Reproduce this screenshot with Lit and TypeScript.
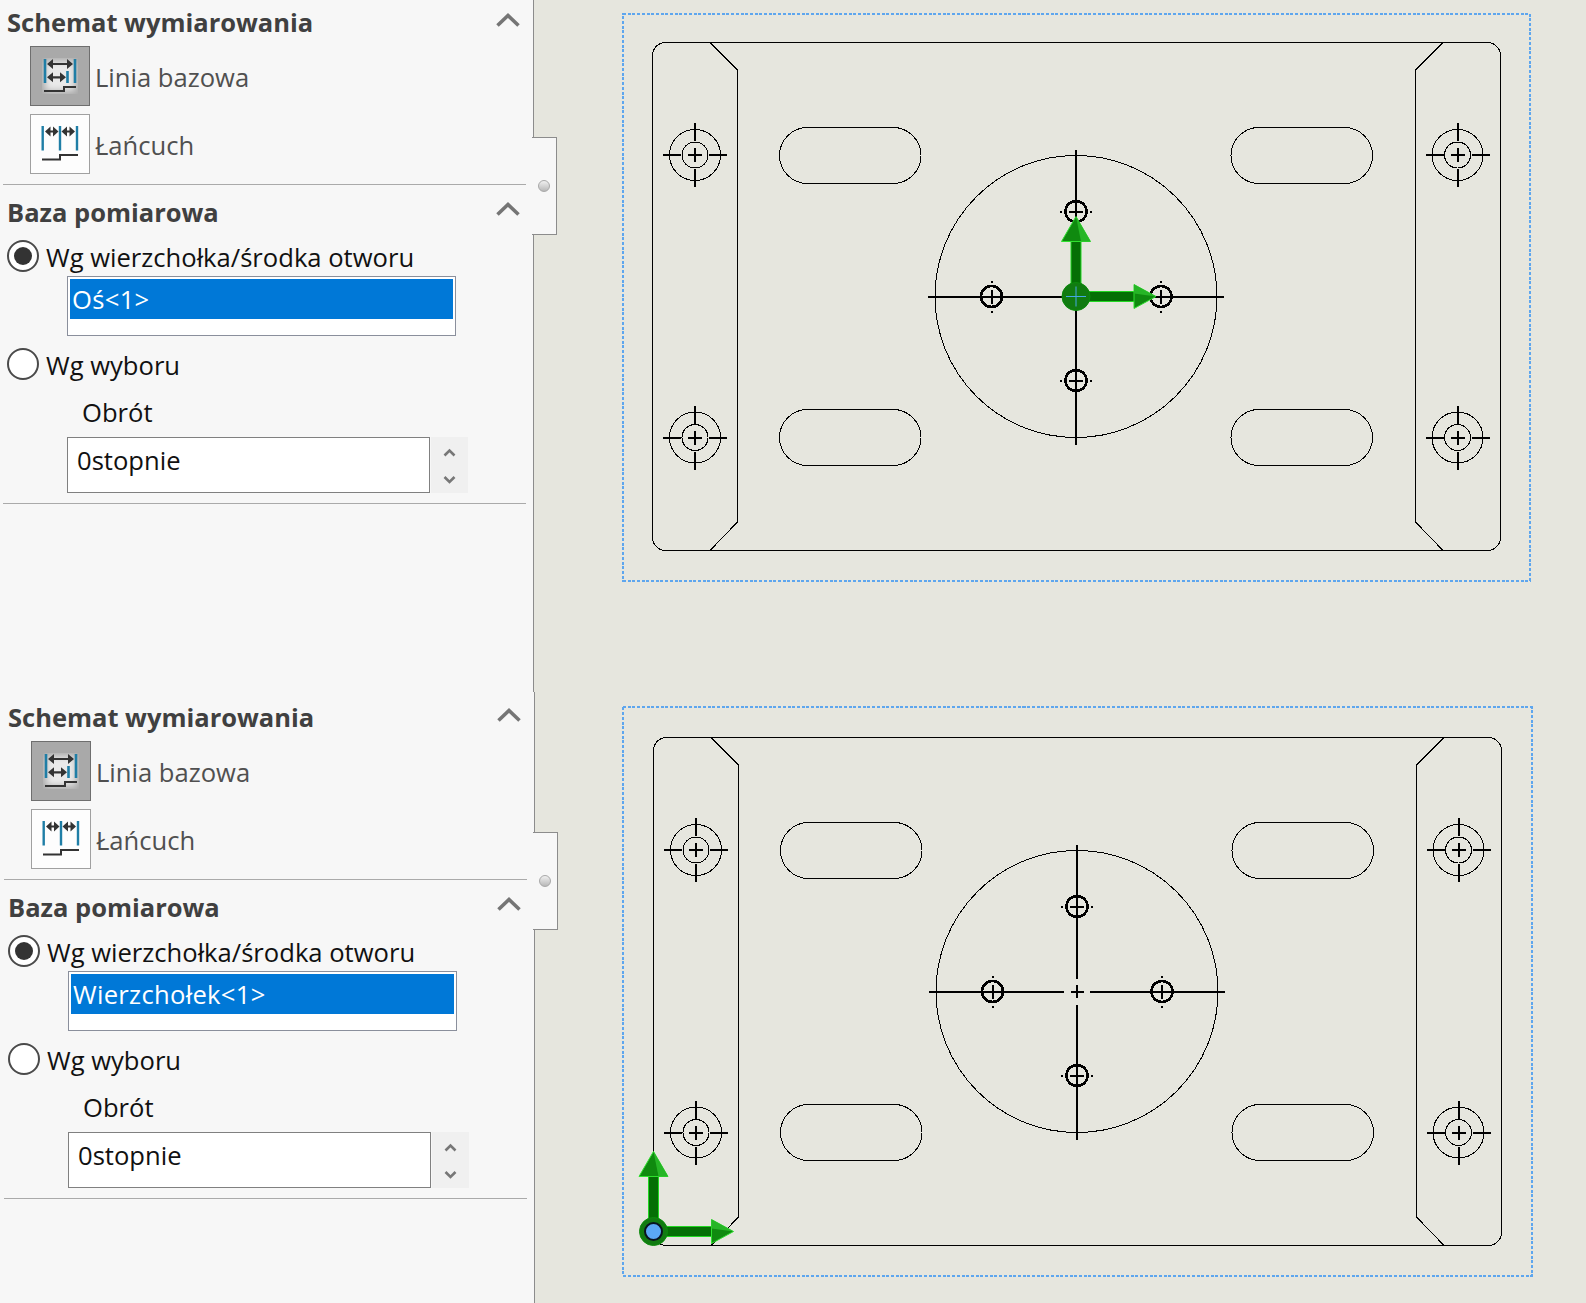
import { LitElement, html, css, svg } from 'lit';
import { customElement, property } from 'lit/decorators.js';

const CX = 1076;
const CY = 296.5;

const MOUNT_HOLES = [[695, 155], [1457.5, 155], [695, 437.5], [1457.5, 437.5]];
const PILOT_HOLES = [
  { x: CX, y: 211.5, ticks: 'h' },
  { x: 991.5, y: CY, ticks: 'v' },
  { x: 1161, y: CY, ticks: 'v' },
  { x: CX, y: 380.5, ticks: 'h' },
];
const SLOTS = [[779.5, 127.5], [1231, 127.5], [779.5, 409.5], [1231, 409.5]];

const line = (x1: number, y1: number, x2: number, y2: number, w = 2) =>
  svg`<line x1=${x1} y1=${y1} x2=${x2} y2=${y2} stroke="#000" stroke-width=${w}></line>`;

const mountHole = ([x, y]: number[]) => svg`
  <circle cx=${x} cy=${y} r="25.5" fill="none" stroke="#000"></circle>
  <circle cx=${x} cy=${y} r="13" fill="none" stroke="#000"></circle>
  ${line(x - 32, y, x - 14, y)}${line(x + 14, y, x + 32, y)}
  ${line(x, y - 32, x, y - 14)}${line(x, y + 14, x, y + 32)}
  ${line(x - 7, y, x + 7, y)}${line(x, y - 7, x, y + 7)}`;

const pilotHole = (h: { x: number; y: number; ticks: string }) => svg`
  <circle cx=${h.x} cy=${h.y} r="10.5" fill="none" stroke="#000" stroke-width="2.6"></circle>
  ${line(h.x - 7, h.y, h.x + 7, h.y)}${line(h.x, h.y - 7, h.x, h.y + 7)}
  ${h.ticks === 'h'
    ? svg`${line(h.x - 16, h.y, h.x - 14, h.y)}${line(h.x + 14, h.y, h.x + 16, h.y)}`
    : svg`${line(h.x, h.y - 16, h.x, h.y - 14)}${line(h.x, h.y + 14, h.x, h.y + 16)}`}`;

// green triad drawn at the selected origin
const triad = (x: number, y: number, blue: boolean) => svg`
  <g shape-rendering="auto">
    <rect x=${x - 5} y=${y - 55} width="10" height="50" fill="#056f05" stroke="#22d822" stroke-width="1"></rect>
    <rect x=${x + 5} y=${y - 5} width="54" height="10" fill="#056f05" stroke="#22d822" stroke-width="1"></rect>
    <polygon points="${x},${y - 80} ${x - 14.5},${y - 55} ${x + 14.5},${y - 55}" fill="#0f8a0f" stroke="#2fe02f"></polygon>
    <polygon points="${x},${y - 80} ${x + 14.5},${y - 55} ${x + 5},${y - 55}" fill="#26b526"></polygon>
    <polygon points="${x + 80},${y} ${x + 58},${y - 12} ${x + 58},${y + 12}" fill="#0f8a0f" stroke="#2fe02f"></polygon>
    <polygon points="${x + 80},${y} ${x + 58},${y - 12} ${x + 58},${y - 3}" fill="#26b526"></polygon>
    <circle cx=${x} cy=${y} r="14" fill="#117b11" stroke="#0c8c0c"></circle>
    ${blue
      ? svg`<circle cx=${x} cy=${y} r="8.5" fill="#5ba8f5" stroke="#0a1420" stroke-width="2"></circle>`
      : svg`<path d="M${x - 10} ${y}H${x + 10}M${x} ${y - 10}V${y + 10}" stroke="#46a8e6" stroke-width="1" fill="none"></path>`}
  </g>`;

@customElement('sketch-canvas')
class SketchCanvas extends LitElement {
  @property() origin = 'axis';

  static styles = css`
    :host {
      display: block;
      height: 100%;
      background: #e6e6de;
      overflow: hidden;
    }
    svg {
      display: block;
    }
  `;

  render() {
    const lower = this.origin !== 'axis';
    const frame = lower ? { x: 622, y: 12, w: 908.5, h: 569 } : { x: 623, y: 13.5, w: 907, h: 567 };
    return html`
      <svg width="1052" height="700" viewBox="534 ${lower ? -3 : 0} 1052 700" shape-rendering="crispEdges">
        <rect x=${frame.x} y=${frame.y} width=${frame.w} height=${frame.h} fill="none" stroke="#5ea6ee" stroke-width="2" stroke-dasharray="3 1.7"></rect>
        <rect x="652.5" y="42.5" width="848" height="508" rx="13" fill="none" stroke="#000"></rect>
        <path d="M710 42.5L737.5 70V522L710 550.5M1443 42.5L1415.5 70V522L1443 550.5" fill="none" stroke="#000"></path>
        ${SLOTS.map(([x, y]) => svg`
          <rect x=${x} y=${y} width="141.5" height="56" rx="28" fill="none" stroke="#000"></rect>`)}
        <circle cx=${CX} cy=${CY} r="141" fill="none" stroke="#000"></circle>
        ${line(928, CY, CX - 13, CY)}${line(CX + 13, CY, 1224, CY)}
        ${line(CX, 150, CX, CY - 13)}${line(CX, CY + 13, CX, 445)}
        ${line(CX - 6.5, CY, CX + 6.5, CY)}${line(CX, CY - 6.5, CX, CY + 6.5)}
        ${MOUNT_HOLES.map(mountHole)}
        ${PILOT_HOLES.map(pilotHole)}
        ${lower ? triad(652.5, 536.5, true) : triad(CX, CY, false)}
      </svg>
    `;
  }
}

const chevron = html`
  <svg class="chevron" width="24" height="14" viewBox="0 0 24 14">
    <path d="M1.5 12.5L12 2.5L22.5 12.5" fill="none" stroke="#757575" stroke-width="3.6"></path>
  </svg>`;

const baselineIcon = html`
  <svg width="58" height="58" viewBox="31 47 58 58">
    <defs><filter id="glow"><feGaussianBlur stdDeviation="3.5"></feGaussianBlur></filter></defs>
    <rect x="45" y="61" width="30" height="30" fill="#fff" opacity="0.75" filter="url(#glow)"></rect>
    <path d="M45 59V83M75 59V83M67.5 71V83" stroke="#1f7ea6" stroke-width="2.6" fill="none"></path>
    <path d="M50 64H70M50 77.3H62" stroke="#333" stroke-width="2.2" fill="none"></path>
    <path d="M47 64L53 59V69ZM73 64L67 59V69ZM47 77.3L53 72.3V82.3ZM66 77.3L60 72.3V82.3Z" fill="#333"></path>
    <path d="M44 91H64V87H76" stroke="#333" stroke-width="2" fill="none"></path>
  </svg>`;

const chainIcon = html`
  <svg width="58" height="58" viewBox="31 115 58 58">
    <path d="M42.7 126V150.5M60 126V150.5M77 126V150.5" stroke="#1f7ea6" stroke-width="2.4" fill="none"></path>
    <path d="M48 131.5H55M65 131.5H72" stroke="#333" stroke-width="2.2" fill="none"></path>
    <path d="M45 131.5L50.5 126.5V136.5ZM58.5 131.5L53 126.5V136.5ZM61.5 131.5L67 126.5V136.5ZM75 131.5L69.5 126.5V136.5Z" fill="#333"></path>
    <path d="M42 159.5H60V155H78" stroke="#333" stroke-width="2" fill="none"></path>
  </svg>`;

@customElement('dim-panel')
class DimPanel extends LitElement {
  @property() selection = '';

  static styles = css`
    :host {
      display: block;
      position: relative;
      box-sizing: border-box;
      height: 100%;
      background: #f7f7f7;
      border-right: 1px solid #8c8c8c;
      font-family: 'Open Sans', 'Noto Sans', sans-serif;
      font-size: 25.6px;
      padding-left: 3px;
    }
    section {
      width: 523px;
      border-bottom: 1px solid #aaa;
    }
    .first {
      height: 184px;
    }
    .second {
      height: 318px;
    }
    header {
      height: 46px;
      box-sizing: border-box;
      padding: 0 6px 0 4px;
      display: flex;
      justify-content: space-between;
      font-weight: 700;
      font-size: 25.5px;
      line-height: 44px;
      color: #404040;
    }
    .second header {
      height: 55px;
      padding-top: 5px;
    }
    .chevron {
      margin-top: 13px;
    }
    .second .chevron {
      margin-top: 12px;
    }
    .tool {
      display: flex;
      align-items: center;
      gap: 5px;
      margin: 0 0 8px 27px;
      color: #505050;
    }
    .tool span,
    .radio-row span:last-child {
      padding-top: 2px;
    }
    .tool-icon {
      width: 58px;
      height: 58px;
      border: 1px solid #a0a0a0;
      background: #fdfdfd;
    }
    .tool-icon.active {
      border-color: #6e6e6e;
      background: #a9a9a9;
    }
    .radio-row {
      display: flex;
      align-items: center;
      gap: 7px;
      height: 32px;
      margin-left: 4px;
      color: #111;
    }
    .radio {
      box-sizing: border-box;
      width: 32px;
      height: 32px;
      border: 2px solid #4a4a4a;
      border-radius: 50%;
      background: #fff;
      display: flex;
      align-items: center;
      justify-content: center;
    }
    .radio.on::after {
      content: '';
      width: 18px;
      height: 18px;
      border-radius: 50%;
      background: #333;
    }
    .listbox {
      box-sizing: border-box;
      width: 389px;
      height: 60px;
      margin: 4px 0 12px 64px;
      padding: 2px;
      border: 1px solid #8a8f9c;
      background: #fff;
    }
    .listbox div {
      height: 40px;
      line-height: 42px;
      padding-left: 2px;
      letter-spacing: 0.3px;
      background: #0078d7;
      color: #fff;
    }
    .caption {
      margin: 9px 0 0 79px;
      height: 48px;
      line-height: 48px;
      color: #111;
    }
    .spin-row {
      display: flex;
      margin-left: 64px;
      gap: 1px;
    }
    .number {
      box-sizing: border-box;
      width: 363px;
      height: 56px;
      line-height: 46px;
      padding-left: 9px;
      border: 1px solid #808080;
      background: #fff;
      color: #111;
    }
    .spinner {
      width: 37px;
      height: 56px;
      background: #f0f0f0;
    }
    .spinner svg {
      display: block;
    }
    .tab {
      position: absolute;
      left: calc(100% - 1px);
      top: var(--tab-top, 137px);
      box-sizing: border-box;
      width: 25px;
      height: 98px;
      background: #f7f7f7;
      border: 1px solid #8c8c8c;
      border-left: none;
    }
    .grip {
      position: absolute;
      left: 6px;
      top: 42px;
      box-sizing: border-box;
      width: 12px;
      height: 12px;
      border: 1px solid #a8a8a8;
      border-radius: 50%;
      background: linear-gradient(#f0f0f0, #b8b8b8);
    }
  `;

  render() {
    return html`
      <section class="first">
        <header>Schemat wymiarowania ${chevron}</header>
        <div class="tool"><div class="tool-icon active">${baselineIcon}</div><span>Linia bazowa</span></div>
        <div class="tool"><div class="tool-icon">${chainIcon}</div><span>Łańcuch</span></div>
      </section>
      <section class="second">
        <header>Baza pomiarowa ${chevron}</header>
        <div class="radio-row"><span class="radio on"></span><span>Wg wierzchołka/środka otworu</span></div>
        <div class="listbox"><div>${this.selection}</div></div>
        <div class="radio-row"><span class="radio"></span><span>Wg wyboru</span></div>
        <div class="caption">Obrót</div>
        <div class="spin-row">
          <div class="number">0stopnie</div>
          <div class="spinner">
            <svg width="37" height="56" viewBox="0 0 37 56">
              <path d="M13.5 18.5L18.5 13.5L23.5 18.5M13.5 40L18.5 45L23.5 40" fill="none" stroke="#777" stroke-width="2.6"></path>
            </svg>
          </div>
        </div>
      </section>
      <div class="tab"><span class="grip"></span></div>
    `;
  }
}

@customElement('app-root')
export class AppRoot extends LitElement {
  static styles = css`
    :host {
      display: block;
      width: 1586px;
      height: 1303px;
      overflow: hidden;
    }
    .view {
      display: grid;
      grid-template-columns: 534px 1fr;
      height: 692px;
    }
    .view.lower {
      grid-template-columns: 535px 1fr;
      height: 611px;
    }
    .lower dim-panel {
      --tab-top: 140px;
      padding: 3px 0 0 4px;
    }
  `;

  render() {
    return html`
      <div class="view">
        <dim-panel selection="Oś<1>"></dim-panel>
        <sketch-canvas origin="axis"></sketch-canvas>
      </div>
      <div class="view lower">
        <dim-panel selection="Wierzchołek<1>"></dim-panel>
        <sketch-canvas origin="vertex"></sketch-canvas>
      </div>
    `;
  }
}
